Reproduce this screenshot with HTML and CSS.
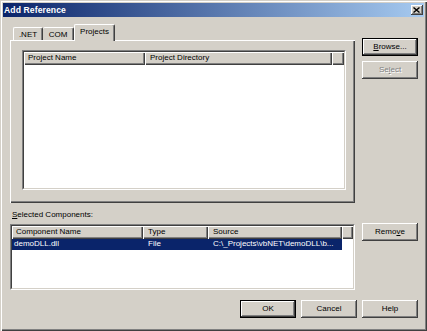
FILE: index.html
```html
<!DOCTYPE html>
<html>
<head>
<meta charset="utf-8">
<title>Add Reference</title>
<link rel="stylesheet" href="styles.css">
</head>
<body>
<div class="window">
  <div class="titlebar">
    <span class="title">Add Reference</span>
    <div class="close"><svg width="7" height="6" viewBox="0 0 7 6"><path d="M0.5 0.5L6.5 5.5M6.5 0.5L0.5 5.5" stroke="#000" stroke-width="1.4" fill="none"/></svg></div>
  </div>
  <div class="content">
    <div class="tabs-area">
      <div class="tabs">
        <div class="tab t-net">.NET</div>
        <div class="tab t-com">COM</div>
        <div class="tab t-proj active">Projects</div>
      </div>
      <div class="panel">
        <div class="lv lv1">
          <div class="lv-in">
            <div class="header">
              <div class="hcell c-pname">Project Name</div>
              <div class="hcell c-pdir">Project Directory</div>
              <div class="hcell c-rest"></div>
            </div>
          </div>
        </div>
      </div>
    </div>
    <div class="side">
      <div class="btn default browse"><span><u>B</u>rowse...</span></div>
      <div class="btn disabled select"><span>Se<u>l</u>ect</span></div>
    </div>
    <div class="label"><u>S</u>elected Components:</div>
    <div class="lv lv2">
      <div class="lv-in">
        <div class="header">
          <div class="hcell c-name">Component Name</div>
          <div class="hcell c-type">Type</div>
          <div class="hcell c-src">Source</div>
          <div class="hcell c-rest"></div>
        </div>
        <div class="row sel">
          <div class="cell c-name first">demoDLL.dll</div>
          <div class="cell c-type">File</div>
          <div class="cell c-src">C:\_Projects\vbNET\demoDLL\b...</div>
        </div>
      </div>
    </div>
    <div class="side2">
      <div class="btn remove"><span>Remo<u>v</u>e</span></div>
    </div>
    <div class="footer">
      <div class="btn default">OK</div>
      <div class="btn">Cancel</div>
      <div class="btn">Help</div>
    </div>
  </div>
</div>
</body>
</html>
```
FILE: styles.css
```css
* { box-sizing: border-box; margin: 0; padding: 0; }
html, body { width: 427px; height: 331px; overflow: hidden; }
body {
  font-family: "Liberation Sans", Arial, sans-serif;
  font-size: 8px;
  color: #000;
  background: #D4D0C8;
}
u { text-decoration: underline; text-underline-offset: 1px; }

.window {
  width: 427px;
  height: 331px;
  background: #D4D0C8;
  padding: 3px;
  box-shadow: inset 1px 1px #D4D0C8, inset 2px 2px #fff, inset -1px -1px #404040, inset -2px -2px #808080;
}

.titlebar {
  height: 14px;
  display: flex;
  align-items: center;
  justify-content: space-between;
  background: linear-gradient(90deg, #0A246A 0%, #A6CAF0 100%);
  padding: 0 1px 0 1px;
}
.title {
  color: #fff;
  font-weight: bold;
  font-size: 8.6px;
  letter-spacing: 0.1px;
}
.close {
  width: 12px;
  height: 10px;
  background: #D4D0C8;
  box-shadow: inset -1px -1px #404040, inset 1px 1px #fff, inset -2px -2px #808080;
  display: flex;
  align-items: center;
  justify-content: center;
  padding: 0 1px 1px 0;
}

.content {
  display: grid;
  grid-template-columns: 345px 56px;
  column-gap: 7px;
  padding: 7px 0 0 7px;
  align-items: start;
}

.tabs {
  display: flex;
  height: 17px;
  padding-left: 3px;
  position: relative;
  z-index: 2;
}
.tab {
  height: 13px;
  margin-top: 3px;
  line-height: 13px;
  text-align: center;
  background: #D4D0C8;
  border-top: 1px solid #fff;
  border-left: 1px solid #fff;
  border-right: 1px solid #404040;
  box-shadow: inset -1px 0 #808080;
  border-radius: 2px 2px 0 0;
}
.t-net { width: 30px; }
.t-com { width: 31px; border-left: 0; }
.t-proj { width: 41px; }
.tab.active {
  height: 17px;
  margin-top: 0;
  line-height: 14px;
}

.panel {
  height: 163px;
  margin-top: -1px;
  background: #D4D0C8;
  box-shadow: inset 1px 1px #fff, inset -1px -1px #404040, inset -2px -2px #808080;
  padding: 10px 0 0 12px;
  position: relative;
  z-index: 1;
}

.lv {
  border: 1px solid;
  border-color: #808080 #fff #fff #808080;
  background: #fff;
}
.lv-in {
  height: 100%;
  border: 1px solid;
  border-color: #404040 #D4D0C8 #D4D0C8 #404040;
  background: #fff;
  overflow: hidden;
}
.lv1 { width: 324px; height: 140px; }
.lv2 { height: 66px; margin-top: 4px; }

.header { display: flex; height: 13px; }
.hcell {
  background: #D4D0C8;
  box-shadow: inset 1px 1px #fff, inset -1px -1px #404040, inset -2px -2px #808080;
  padding-left: 5px;
  line-height: 12px;
  white-space: nowrap;
  overflow: hidden;
  flex: none;
}
.hcell.c-rest { flex: 1; }
.c-pname { width: 121px; padding-left: 4px; }
.c-pdir { width: 187px; }
.c-name { width: 131px; padding-left: 4px; }
.c-type { width: 65px; }
.c-src { width: 134px; }

.row { display: flex; height: 11px; }
.cell {
  line-height: 10px;
  padding-left: 5px;
  white-space: nowrap;
  overflow: hidden;
  flex: none;
}
.cell.first { padding-left: 2px; }
.row.sel .cell { background: #0A246A; color: #fff; }

.side { display: flex; flex-direction: column; gap: 5px; padding-top: 14px; }
.side2 { margin-top: 3px; }

.btn {
  width: 56px;
  height: 18px;
  background: #D4D0C8;
  box-shadow: inset -1px -1px #404040, inset 1px 1px #fff, inset -2px -2px #808080;
  display: flex;
  align-items: center;
  justify-content: center;
  padding-bottom: 1px;
}
.btn.default {
  border: 1px solid #000;
}
.btn.disabled { color: #808080; text-shadow: 1px 1px #fff; }

.label {
  grid-column: 1 / -1;
  margin-top: 6px;
  line-height: 11px;
  padding-left: 2px;
}

.footer {
  grid-column: 1 / -1;
  display: flex;
  justify-content: flex-end;
  gap: 5px;
  margin-top: 10px;
}
```
